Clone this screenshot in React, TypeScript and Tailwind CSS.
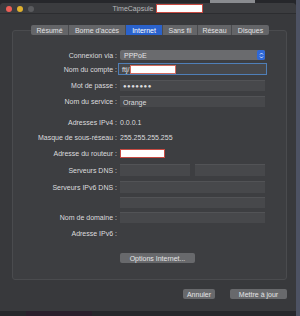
import React from "react";

const font = { fontFamily: '"Liberation Sans", Arial, sans-serif' };

function Label({ children }: { children: React.ReactNode }) {
  return (
    <div className="w-[106px] shrink-0 text-right pr-[2px] text-[7px] leading-none text-[#dcdcde] whitespace-nowrap">
      {children}
    </div>
  );
}

function Field({ className = "", children }: { className?: string; children?: React.ReactNode }) {
  return (
    <div className={"bg-[#47484b] border-t border-[#525356] flex items-center px-[3px] text-[7px] leading-none text-[#dcdcde] " + className}>
      {children}
    </div>
  );
}

export default function App() {
  const tabs = ["Résumé", "Borne d'accès", "Internet", "Sans fil", "Réseau", "Disques"];
  const widths = ["w-[37px]", "w-[57px]", "w-[37px]", "w-[35px]", "w-[34px]", "w-[38px]"];
  return (
    <div className="w-[300px] h-[316px] bg-[#26272b] flex flex-col overflow-hidden relative" style={font}>
      <div className="absolute left-[210px] top-0 w-[45px] h-[3px] bg-[#8a8c90]" />
      <div className="absolute left-[296px] top-[0px] w-[4px] h-[316px] bg-[#4d5263]" />
      <div className="absolute left-[26px] top-[311px] w-[66px] h-[5px] bg-[#2b1f2c]" />
      <div className="h-[3px] shrink-0" />
      <div className="w-[296px] h-[308px] bg-[#38393c] rounded-t-[4px] flex flex-col shrink-0 relative">
        {/* title bar */}
        <div className="h-[11px] relative flex items-center justify-center border-b border-[#2c2d30] bg-[#3b3c3f] rounded-t-[4px]">
          <div className="absolute left-[6px] top-[3px] flex gap-[5px]">
            <div className="w-[6px] h-[6px] rounded-full bg-[#ec5f57]" />
            <div className="w-[6px] h-[6px] rounded-full bg-[#e0b12e]" />
            <div className="w-[6px] h-[6px] rounded-full bg-[#5b5c5f]" />
          </div>
          <div className="flex items-center ml-[20px]">
            <span className="text-[7px] leading-none text-[#b8b8ba]">TimeCapsule</span>
            <div className="ml-[3px] w-[47px] h-[9px] bg-white border border-[#c84a42]" />
          </div>
        </div>
        {/* tabs */}
        <div className="mt-[11px] ml-[31px] flex h-[10px] relative z-10">
          {tabs.map((t, i) => (
            <div
              key={t}
              className={
                widths[i] +
                " flex items-center justify-center text-[7px] leading-none whitespace-nowrap " +
                (i === 2
                  ? "bg-[#2a62cc] text-white"
                  : "bg-[#646568] text-[#e2e2e4]") +
                (i > 0 ? " border-l border-[#4a4b4e]" : "") +
                (i === 0 ? " rounded-l-[2px]" : "") +
                (i === 5 ? " rounded-r-[2px]" : "")
              }
            >
              {t}
            </div>
          ))}
        </div>
        {/* group box */}
        <div className="-mt-[5px] ml-[12px] w-[275px] h-[250px] bg-[#3d3e41] border border-[#4a4b4e] rounded-[3px] flex flex-col">
          <div className="mt-[19px] h-[10px] flex items-center">
            <Label>Connexion via :</Label>
            <div className="ml-[1px] w-[145px] h-[10px] bg-[#6a6b6e] rounded-[2px] flex items-center justify-between pl-[4px] text-[7px] leading-none text-[#e4e4e6]">
              <span>PPPoE</span>
              <div className="w-[8px] h-[10px] bg-[#2f68d6] rounded-[2px] flex items-center justify-center">
                <svg width="5" height="7" viewBox="0 0 5 7">
                  <path d="M1 2.5 L2.5 1 L4 2.5 M1 4.5 L2.5 6 L4 4.5" stroke="white" strokeWidth="0.8" fill="none" />
                </svg>
              </div>
            </div>
          </div>
          <div className="mt-[3px] h-[12px] flex items-center">
            <Label>Nom du compte :</Label>
            <div className="-ml-[1px] w-[149px] h-[12px] border-[1.5px] border-[#4f7fb8] bg-[#47484b] flex items-center pl-[3px] text-[7px] leading-none text-[#e4e4e6]">
              <span>ftj/</span>
              <div className="ml-[1px] w-[46px] h-[9px] bg-white border border-[#d06a5e]" />
            </div>
          </div>
          <div className="mt-[5px] h-[11px] flex items-center">
            <Label>Mot de passe :</Label>
            <Field className="ml-[1px] w-[145px] h-[11px]">
              <span className="text-[6px] tracking-[0.5px]">●●●●●●●</span>
            </Field>
          </div>
          <div className="mt-[5px] h-[11px] flex items-center">
            <Label>Nom du service :</Label>
            <Field className="ml-[1px] w-[145px] h-[11px]">Orange</Field>
          </div>
          <div className="mt-[10px] h-[10px] flex items-center">
            <Label>Adresses IPv4 :</Label>
            <span className="ml-[1px] text-[7px] leading-none text-[#dcdcde]">0.0.0.1</span>
          </div>
          <div className="mt-[5px] h-[10px] flex items-center">
            <Label>Masque de sous-réseau :</Label>
            <span className="ml-[1px] text-[7px] leading-none text-[#dcdcde]">255.255.255.255</span>
          </div>
          <div className="mt-[6px] h-[10px] flex items-center">
            <Label>Adresse du routeur :</Label>
            <div className="ml-[1px] w-[45px] h-[9px] bg-white border border-[#c84a42]" />
          </div>
          <div className="mt-[6px] h-[12px] flex items-center">
            <Label>Serveurs DNS :</Label>
            <Field className="ml-[1px] w-[70px] h-[12px]" />
            <Field className="ml-[5px] w-[70px] h-[12px]" />
          </div>
          <div className="mt-[5px] h-[12px] flex items-center">
            <Label>Serveurs IPv6 DNS :</Label>
            <Field className="ml-[1px] w-[145px] h-[12px]" />
          </div>
          <div className="mt-[4px] h-[11px] flex items-center">
            <div className="w-[106px] shrink-0" />
            <Field className="ml-[1px] w-[145px] h-[11px]" />
          </div>
          <div className="mt-[4px] h-[11px] flex items-center">
            <Label>Nom de domaine :</Label>
            <Field className="ml-[1px] w-[145px] h-[11px]" />
          </div>
          <div className="mt-[5px] h-[10px] flex items-center">
            <Label>Adresse IPv6 :</Label>
          </div>
          <div className="mt-[15px] h-[10px] flex items-center">
            <div className="w-[106px] shrink-0" />
            <div className="ml-[1px] w-[75px] h-[10px] bg-[#68696c] rounded-[2px] flex items-center justify-center text-[7px] leading-none text-[#e4e4e6]">
              Options Internet...
            </div>
          </div>
        </div>
        {/* bottom buttons */}
        <div className="mt-[9px] flex justify-end pr-[9px] gap-[15px]">
          <div className="w-[32px] h-[10px] bg-[#68696c] rounded-[2px] flex items-center justify-center text-[7px] leading-none text-[#e4e4e6]">
            Annuler
          </div>
          <div className="w-[57px] h-[10px] bg-[#68696c] rounded-[2px] flex items-center justify-center text-[7px] leading-none text-[#e4e4e6]">
            Mettre à jour
          </div>
        </div>
      </div>
    </div>
  );
}
